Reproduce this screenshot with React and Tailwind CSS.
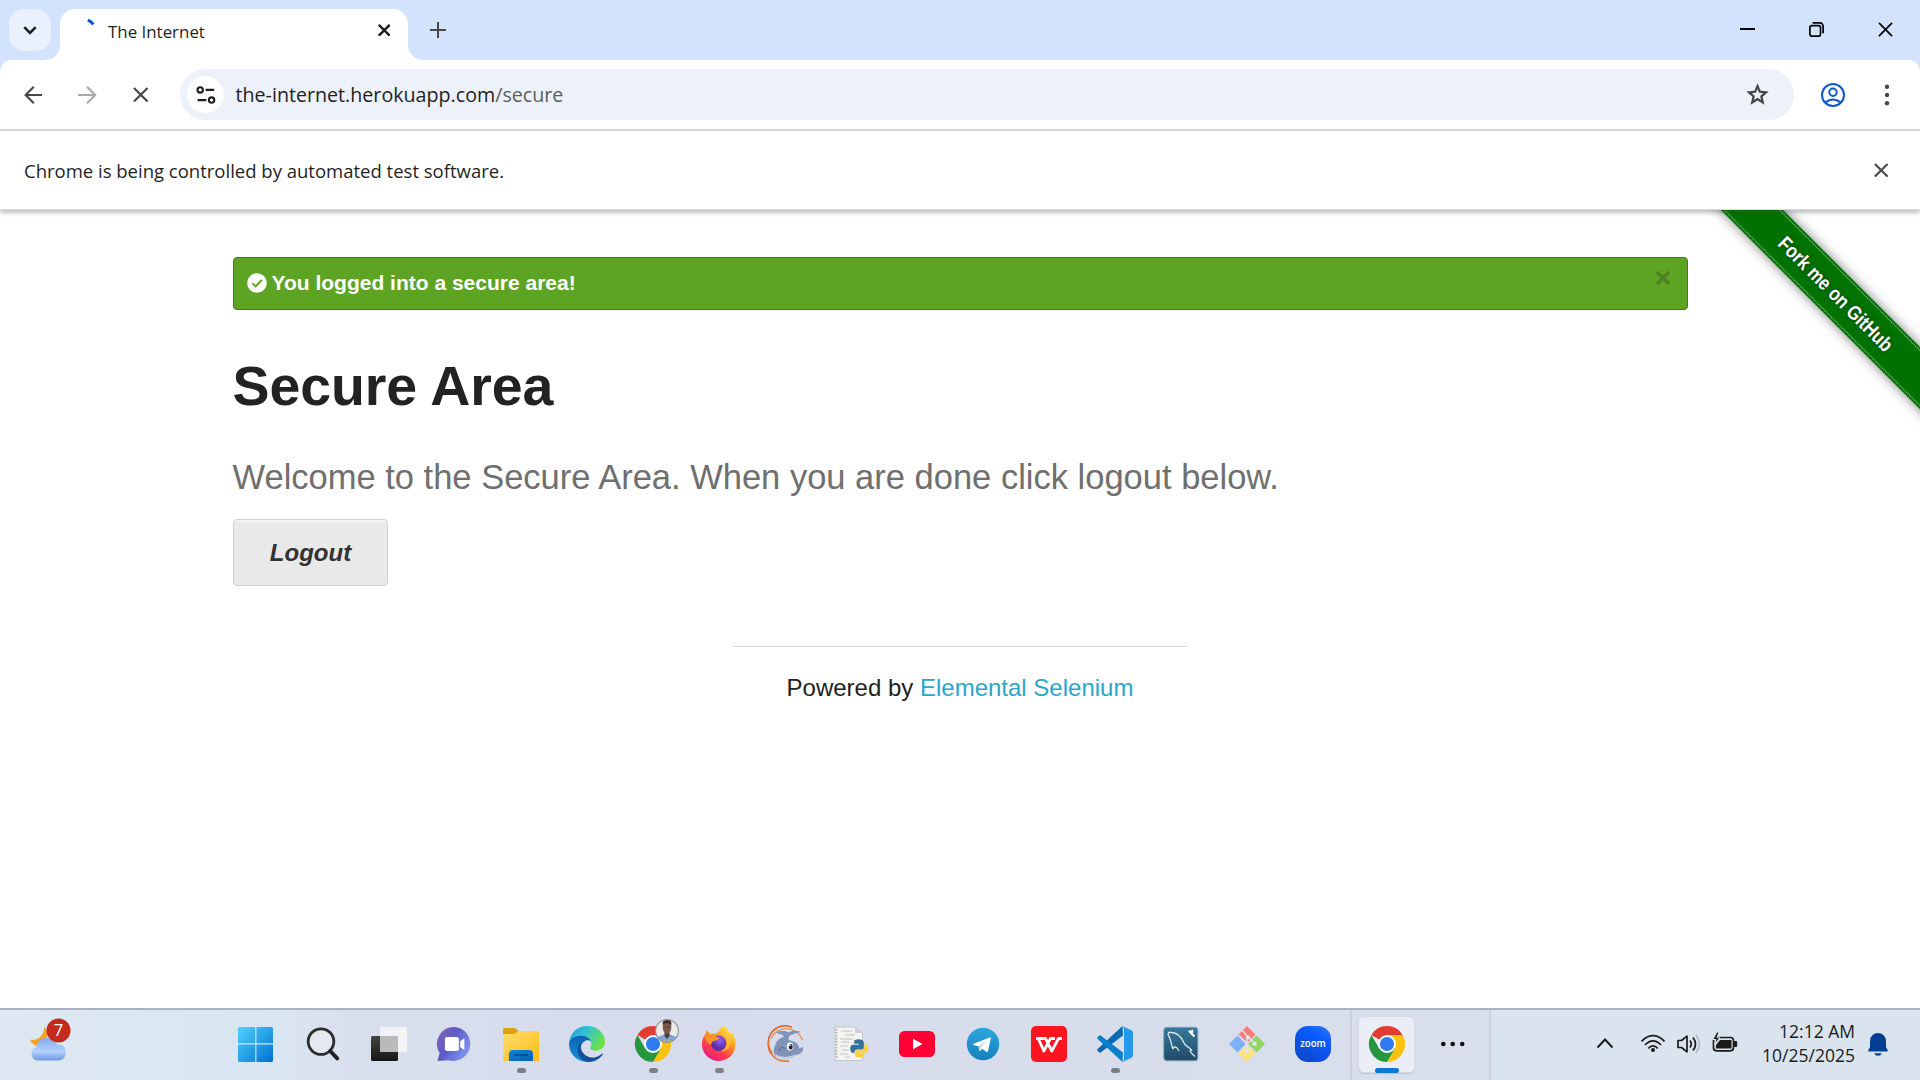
import React from 'react';

const ui = "font-['Open_Sans','Noto_Sans',sans-serif]";

function Cross({ size, width, color }) {
  return (
    <svg width={size} height={size} viewBox="0 0 16 16" className="block shrink-0">
      <path d="M1 1 15 15M15 1 1 15" fill="none" stroke={color} strokeWidth={(width * 16) / size} />
    </svg>
  );
}

function TabStrip() {
  return (
    <div className="flex h-[60px] w-full items-start bg-[#d3e3fd]">
      <button className="mt-[9px] ml-[9px] flex h-[42px] w-[42px] items-center justify-center rounded-[15px] bg-[#e9f1fe]">
        <svg width="14" height="9" viewBox="0 0 14 9"><path d="M1.3 1.2 7 6.9 12.7 1.2" fill="none" stroke="#1f1f1f" strokeWidth="2.6" /></svg>
      </button>
      <div className="relative mt-[9px] ml-[9px] flex h-[51px] w-[348px] items-center rounded-t-[15px] bg-white">
        <svg className="absolute bottom-0 -left-[15px]" width="15" height="15" viewBox="0 0 15 15"><path d="M15 0V15H0A15 15 0 0 0 15 0Z" fill="#fff" /></svg>
        <svg className="absolute -right-[15px] bottom-0" width="15" height="15" viewBox="0 0 15 15"><path d="M0 0V15H15A15 15 0 0 1 0 0Z" fill="#fff" /></svg>
        <svg className="-mt-[9px] ml-[18px] shrink-0" width="24" height="24" viewBox="0 0 24 24"><path d="M9.8 2.2Q13 3.4 15.400 6.400" fill="none" stroke="#0b57d0" strokeWidth="3" /></svg>
        <span className="-mt-[6px] ml-[6px] flex-1 text-[16.9px] leading-[24px] text-[#1f1f1f]">The Internet</span>
        <span className="-mt-[9px] mr-[18px]"><Cross size={12.5} width={2.4} color="#1f1f1f" /></span>
      </div>
      <svg className="mt-[22px] ml-[22px]" width="16" height="16" viewBox="0 0 16 16"><path d="M8 0V16M0 8H16" stroke="#474747" strokeWidth="2" /></svg>
      <div className="mt-[22px] mr-[27px] ml-auto flex items-center gap-[54px]">
        <svg width="15" height="15" viewBox="0 0 15 15"><path d="M0 7H15" stroke="#000" strokeWidth="2" /></svg>
        <svg width="15" height="15" viewBox="0 0 15 15" fill="none" stroke="#000" strokeWidth="1.7">
          <rect x=".9" y="3.6" width="10.6" height="10.6" rx="2" />
          <path d="M3.6 .9H10.6A3.6 3.6 0 0 1 14.1 4.4V11.2" />
        </svg>
        <Cross size={15} width={1.7} color="#000" />
      </div>
    </div>
  );
}

function Toolbar() {
  return (
    <div className="bg-[#d3e3fd]">
      <div className="flex h-[69px] w-full items-center rounded-t-[12px] bg-white">
        <svg className="ml-[24px]" width="19" height="18" viewBox="0 0 19 18" fill="none" stroke="#474747" strokeWidth="2.1"><path d="M18 9H2M9.8 .8 1.6 9l8.2 8.2" /></svg>
        <svg className="ml-[35px]" width="19" height="18" viewBox="0 0 19 18" fill="none" stroke="#a9a9a9" strokeWidth="2.1"><path d="M0 9H16M9 .8 17.2 9 9 17.2" /></svg>
        <span className="ml-[36px]"><Cross size={15.5} width={2.1} color="#474747" /></span>
        <div className="ml-[31.5px] flex h-[51px] w-[1614px] items-center rounded-full bg-[#ecf1fa]">
          <span className="ml-[7px] flex h-[37px] w-[37px] items-center justify-center rounded-full bg-white">
            <svg width="20" height="18" viewBox="0 0 20 18" fill="none" stroke="#1f1f1f" strokeWidth="2.1">
              <circle cx="4.2" cy="3.9" r="2.7" /><path d="M9.6 3.9H18.2M1.6 14.1H10.4" /><circle cx="15.6" cy="14.1" r="2.7" />
            </svg>
          </span>
          <span className="ml-[11.5px] text-[19.67px] leading-[28px] text-[#1f1f1f]">the-internet.herokuapp.com<span className="text-[#5b5d60]">/secure</span></span>
          <svg className="mr-[23px] ml-auto" width="27" height="27" viewBox="0 0 24 24" fill="#474747">
            <path d="m8.85 16.825 3.15-1.9 3.15 1.925-.825-3.6 2.775-2.4-3.65-.325-1.45-3.4-1.45 3.375-3.65.325 2.775 2.425zM5.825 21l1.625-7.025L2 9.25l7.2-.625L12 2l2.8 6.625 7.2.625-5.45 4.725L18.175 21 12 17.275z" />
          </svg>
        </div>
        <svg className="ml-[27px]" width="24" height="24" viewBox="0 0 24 24" fill="none" stroke="#0b57d0" strokeWidth="2">
          <circle cx="12" cy="12" r="11" /><circle cx="12" cy="9.3" r="3.7" /><path d="M4.4 19.4Q8 16.6 12 16.6T19.6 19.4" />
        </svg>
        <svg className="ml-[39px]" width="6" height="24" viewBox="0 0 6 24" fill="#474747"><circle cx="3" cy="3.7" r="2.2" /><circle cx="3" cy="12" r="2.2" /><circle cx="3" cy="20.3" r="2.2" /></svg>
      </div>
    </div>
  );
}

function InfoBar() {
  return (
    <div className="relative z-10 flex h-[81px] w-full items-center justify-between border-t-2 border-b border-t-[#d6d7d8] border-b-[#d9dbdc] bg-white pr-[32px] pl-[24px] shadow-[0_3px_4px_0_rgba(60,70,64,0.32)]">
      <span className="pt-[2px] text-[18.5px] leading-[26px] text-[#1f1f1f]">Chrome is being controlled by automated test software.</span>
      <Cross size={14.5} width={2.1} color="#474747" />
    </div>
  );
}

function Ribbon() {
  return (
    <div className="absolute top-0 right-0 h-[240px] w-[240px] overflow-hidden">
      <div className="absolute top-[62px] -left-[44px] flex h-[43.5px] w-[400px] rotate-45 items-center justify-center bg-[#007200] shadow-[0_0_12px_rgba(0,0,0,0.5)]">
        <div className="absolute inset-x-0 top-[2px] border-t-[1.5px] border-dotted border-[#a9d3a9]" />
        <div className="absolute inset-x-0 bottom-[2px] border-b-[1.5px] border-dotted border-[#a9d3a9]" />
        <span className="mr-[1px] scale-x-[0.85] text-[20px] leading-[28px] font-bold whitespace-nowrap text-white [text-shadow:0_0_4px_rgba(0,0,0,0.6)]">Fork me on GitHub</span>
      </div>
    </div>
  );
}

function Page() {
  return (
    <main className="relative h-[798px] w-full overflow-hidden bg-white pt-[47px] font-['Liberation_Sans',Arial,sans-serif]">
      <div className="mx-auto w-[1455px]">
        <div className="flex h-[53px] items-center rounded-[4px] border border-[#457a1a] bg-[#5da423] pb-[2px] pl-[13px]">
          <svg width="20" height="20" viewBox="0 0 20 20"><circle cx="10" cy="10" r="9.8" fill="#fff" /><path d="M5.4 10.3 8.7 13.4 14.8 7" fill="none" stroke="#5da423" strokeWidth="1.9" /></svg>
          <span className="ml-[5px] text-[21px] leading-[26px] font-bold text-white">You logged into a secure area!</span>
          <span className="mr-[16.5px] mb-[10px] ml-auto"><Cross size={14} width={3.6} color="#4f8225" /></span>
        </div>
        <h2 className="mt-[37px] text-[55.5px] leading-[78px] font-bold tracking-[-0.1px] text-[#222]">Secure Area</h2>
        <h4 className="mt-[28px] text-[34.5px] leading-[48px] whitespace-nowrap text-[#6f6f6f]">Welcome to the Secure Area. When you are done click logout below.</h4>
        <button className="mt-[18px] flex h-[67px] w-[155px] items-center justify-center rounded-[4px] border border-[#d0d0d0] bg-[#e9e9e9] pl-[1px] text-[24px] leading-[28px] font-bold text-[#333] italic shadow-[inset_0_2px_0_rgba(255,255,255,0.5)]">Logout</button>
      </div>
      <footer className="mx-auto mt-[60px] w-[454px] border-t border-[#d8d8d8] pt-[27px] text-center text-[24px] leading-[28px] text-[#222]">
        Powered by <a className="text-[#2ba6cb]">Elemental Selenium</a>
      </footer>
      <Ribbon />
    </main>
  );
}

function Icon({ children }) {
  return <svg width="36" height="36" viewBox="0 0 36 36" className="block overflow-visible">{children}</svg>;
}

function ChromeLogo() {
  return (
    <Icon>
      <path d="M18 18 2.4 9A18 18 0 0 1 33.6 9Z" fill="#e33b2e" />
      <path d="M18 18V9H33.6A18 18 0 0 1 18 36L25.8 22.5Z" fill="#fcc210" />
      <path d="M18 18 25.8 22.5 18 36A18 18 0 0 1 2.4 9L10.2 22.5Z" fill="#26963f" />
      <circle cx="18" cy="18" r="9" fill="#fff" /><circle cx="18" cy="18" r="7.1" fill="#307cee" />
    </Icon>
  );
}

const apps = [
  { id: 'start', icon: (
    <Icon>
      <defs><linearGradient id="win" x1="0" y1="0" x2="1" y2="1"><stop offset="0" stopColor="#4fd3ff" /><stop offset="1" stopColor="#0070d0" /></linearGradient></defs>
      <path d="M0 1.5Q0 1 .8 1H15.5Q16.3 1 16.3 1.5V17.2H-1V2.5Q-1 1 .5 1ZM17.4 1H32.5Q34 1 34 2.5V17.2H17.4ZM-1 18.6H16.3V36H.5Q-1 36-1 34.5ZM17.4 18.6H34V34.5Q34 36 32.5 36H17.4Z" fill="url(#win)" />
    </Icon>) },
  { id: 'search', icon: (
    <Icon><circle cx="16" cy="15.6" r="12.8" fill="#e6e8ef" stroke="#2c2c2c" strokeWidth="2.8" /><path d="M25.2 25 32.2 32.4" stroke="#222" strokeWidth="4" strokeLinecap="round" /></Icon>) },
  { id: 'taskview', icon: (
    <Icon>
      <defs><linearGradient id="tv" x1="0" y1="0" x2="0" y2="1"><stop offset="0" stopColor="#444" /><stop offset="1" stopColor="#161616" /></linearGradient></defs>
      <rect x="0" y="10" width="27" height="25" rx="1.5" fill="url(#tv)" /><rect x="9" y="1" width="27" height="25" rx="1.5" fill="#f3f3f5" /><path d="M9 10H27V26H10.5Q9 26 9 24.5Z" fill="#bababa" />
    </Icon>) },
  { id: 'meet', icon: (
    <Icon>
      <defs><linearGradient id="mt" x1="0" y1="0" x2="1" y2=".6"><stop offset="0" stopColor="#8a64b0" /><stop offset=".5" stopColor="#5c5cc8" /><stop offset="1" stopColor="#7f94ee" /></linearGradient></defs>
      <g transform="translate(.9 0)">
        <path d="M17 1A17 17 0 1 1 10.500 34.200L-.5 35 1.700 27A17 17 0 0 1 17 1Z" fill="url(#mt)" />
        <rect x="7" y="11" width="14" height="14" rx="2" fill="#fff" /><path d="M22.300 15.400 26.500 12V24.300L22.300 21Z" fill="#fff" />
      </g>
    </Icon>) },
  { id: 'files', running: true, icon: (
    <Icon>
      <defs><linearGradient id="fo" x1="0" y1="0" x2="1" y2="1"><stop offset="0" stopColor="#ffdd70" /><stop offset="1" stopColor="#fbbc14" /></linearGradient><linearGradient id="fb" x1="0" y1="0" x2="1" y2="1"><stop offset="0" stopColor="#0d86dc" /><stop offset="1" stopColor="#0560ae" /></linearGradient></defs>
      <path d="M0 3.500Q0 2 1.500 2H11Q12.500 2 13.500 3L16 5.500V10H0Z" fill="#dfa010" /><path d="M0 8H10.500Q12 8 13 7L15 5H34.500Q36 5 36 6.500V35H0Z" fill="url(#fo)" />
      <path d="M6 35V28Q6 24 10 24H26Q30 24 30 28V35Z" fill="url(#fb)" /><path d="M11 29H25" stroke="#064f94" strokeWidth="1.800" />
    </Icon>) },
  { id: 'edge', icon: (
    <Icon>
      <defs>
        <linearGradient id="ed1" x1="0" y1="0" x2="1" y2=".5"><stop offset="0" stopColor="#2196dc" /><stop offset=".45" stopColor="#2fc3d4" /><stop offset="1" stopColor="#6be04a" /></linearGradient>
        <linearGradient id="ed2" x1="0" y1="0" x2="0" y2="1"><stop offset="0" stopColor="#0c62b4" /><stop offset="1" stopColor="#1390dc" /></linearGradient>
      </defs>
      <path d="M.2 16C1.500 6 9 0 18 0 28.500 0 36 7.500 36 15.500 36 21 32 24.800 27 24.800 23.500 24.800 21 23.500 21 22 21 21 22.300 20.200 22.300 17.800 22.300 13 17.500 9.500 12 9.500 6 9.500 1.500 12.500.2 16Z" fill="url(#ed1)" />
      <path d="M0 18C0 13 5.500 9.500 12 9.500 17.500 9.500 21.500 12.500 22.300 16 20 13 14 14 12 20 10.500 27 16 34 22 35.500A18 18 0 0 1 0 18Z" fill="url(#ed2)" />
      <path d="M12.500 16.500C9.500 25 17 32.500 25 31.500 28.500 31 31 29.500 33 27.500Q34.500 27 33.500 29A18 18 0 0 1 20 36C13 35.500 8 30 8.500 23.500 8.800 20 10.500 17.500 12.500 16.500Z" fill="#12509c" />
    </Icon>) },
  { id: 'chrome', running: true, avatar: true, icon: <ChromeLogo /> },
  { id: 'firefox', running: true, icon: (
    <Icon>
      <defs><linearGradient id="ff" x1=".85" y1="0" x2=".25" y2="1"><stop offset="0" stopColor="#fff44f" /><stop offset=".4" stopColor="#ff9a1f" /><stop offset=".7" stopColor="#ff3d4a" /><stop offset="1" stopColor="#e31587" /></linearGradient>
        <radialGradient id="fp" cx=".6" cy=".3"><stop offset="0" stopColor="#9a5cff" /><stop offset="1" stopColor="#5b2fa8" /></radialGradient></defs>
      <g transform="translate(.5 0)">
        <path d="M22.500 0C27 3 28 6 28.500 8L30.500 6.500C33 10 34 14 34 18A16.700 16.700 0 0 1 .5 18.500C.5 13 2.500 9.500 4.500 7.500V4.500Q7 5.500 8.500 8L12.500 7.500C16 7.500 18 5 18.500 3Q19.500 1.500 22.500 0Z" fill="url(#ff)" />
        <circle cx="17" cy="17.300" r="7.700" fill="url(#fp)" />
        <path d="M3 10Q7 6 11.500 9.500L18 11.500Q17 14 13.500 14.700 10.500 15 9.500 18.500 5 17 3 10Z" fill="#ff9722" />
        <path d="M19 6Q26 9 25.500 17 25 23 19 25.500 29 25 29.500 15 28 6 21 3Z" fill="#ffc83c" opacity=".7" />
      </g>
    </Icon>) },
  { id: 'dolphin', icon: (
    <Icon>
      <path d="M35.500 14A17 17 0 0 0 4 12.500" fill="none" stroke="#f0913c" strokeWidth="1.400" />
      <path d="M25 1.200A16.800 16.800 0 0 0 5 27" fill="none" stroke="#df5a24" strokeWidth="1.500" />
      <path d="M1.800 14A17 17 0 0 0 22 34.800" fill="none" stroke="#e8702c" strokeWidth="1.600" />
      <path d="M8 20C9 14 14 12 17 10.500 16 8.500 12 8 9 6.500 14 4.300 19 5 21.500 6.500 25 4 29.500 4.500 34 6 28 7.500 23 8.500 21.500 11.500 21 14.500 24 15 27 15.500 31 17 31.500 20.500 32.500 22.500L35.500 21Q37 22 35 26C32 29 29 28.500 27 30 21 35 9 34 7 27 6.500 24 7 22 8 20Z" fill="#8093b8" />
      <path d="M8 28Q17 34 29 28 20 36 10 32.500Z" fill="#c6d2e6" /><path d="M12 25Q14 19 18 23" fill="none" stroke="#5f7298" strokeWidth="1.200" />
      <ellipse cx="23" cy="20.500" rx="3.200" ry="4" fill="#fff" /><ellipse cx="23.700" cy="20.800" rx="2" ry="2.700" fill="#1d2026" /><circle cx="23" cy="19.500" r=".8" fill="#fff" />
    </Icon>) },
  { id: 'python', icon: (
    <Icon>
      <path d="M2 1H22L29.500 7V34.500H2Z" fill="#f3f3f1" stroke="#b9bcc4" strokeWidth=".8" /><path d="M22 1V7H29.500Z" fill="#cfd0d4" />
      <path d="M3.500 3V33" stroke="#aaa" strokeWidth="1.600" strokeDasharray="1.500 1.500" /><path d="M8 5H19M12 9H22M7 13H20M8 16H16M7 20H15M9 24H16M7 28H15M12 31H17" stroke="#c2c2c0" strokeWidth="1" />
      <g transform="translate(-.2 0)">
        <path d="M22 14Q25.500 12.600 29.500 14 31 15 31 17V21.500Q31 23.500 29 23.500H24.500Q22 23.500 21.500 26V27H20Q17.500 26.500 17.500 22.500T20.500 18.700H26V17.700H21.500V15.500Q21.500 14.300 22 14Z" fill="#34709f" />
        <path d="M31.500 18.500H33.500Q35.500 19.500 35.500 23T33.500 26.500H27.500V27.500H31.500V29Q31.500 30.500 29.500 31 26.500 31.700 23.500 30.700 22 30 22 28.500V26Q22.200 24.300 24.500 24.200H29.500Q31.500 24 31.500 21.500Z" fill="#ffd03d" />
      </g>
    </Icon>) },
  { id: 'youtube', icon: <Icon><rect x="0" y="5" width="36" height="26" rx="5.500" fill="#ff0033" /><path d="M14 12.800V23.200L23.500 18Z" fill="#fff" /></Icon> },
  { id: 'telegram', icon: (
    <Icon>
      <defs><linearGradient id="tg" x1="0" y1="0" x2="0" y2="1"><stop offset="0" stopColor="#2ea6e0" /><stop offset="1" stopColor="#1580ba" /></linearGradient></defs>
      <circle cx="18" cy="18" r="16.200" fill="url(#tg)" /><path d="M8.500 17.800 24.500 11.400Q26 11 25.700 12.800L23 25.300Q22.500 26.600 21.200 25.800L17.200 22.800 15.200 24.800Q14.500 25.400 14.300 24.300L13.700 20.600 8.700 19Q7.300 18.400 8.500 17.800Z" fill="#fff" /><path d="M13.700 20.600 22 14.300 15.600 21.500 15 24.500" fill="#b5d5e8" />
    </Icon>) },
  { id: 'wps', icon: (
    <Icon>
      <rect width="36" height="36" rx="5" fill="#ff1420" />
      <path d="M5 12.500H14.500L20.800 25 27.500 12.500H31M7.300 12.500 12.800 25 19.500 12.500H24" fill="none" stroke="#fff" strokeWidth="2.800" strokeLinejoin="round" />
    </Icon>) },
  { id: 'vscode', running: true, icon: (
    <Icon><path d="M26 9.500 4 26.300Q3 27 2 26.200L.6 24.800Q-.2 24 .6 23L25.500 0Z" fill="#0b68b4" /><path d="M26 26.500 4 9.700Q3 9 2 9.800L.6 11.200Q-.2 12 .6 13L25.500 36Z" fill="#0a80cc" /><path d="M25 0 34.500 4.300Q36 5 36 6.500V29.500Q36 31 34.500 31.700L25.500 36Q27 35 27 33V3Q27 1 25 0Z" fill="#2498ea" /></Icon>) },
  { id: 'mysql', icon: (
    <Icon>
      <defs><linearGradient id="my" x1="0" y1="0" x2="0" y2="1"><stop offset="0" stopColor="#36789b" /><stop offset="1" stopColor="#214b66" /></linearGradient></defs>
      <rect x=".8" y="1.300" width="34" height="33.500" rx="3" fill="url(#my)" stroke="#79a3bb" strokeWidth="1" />
      <path d="M10 23C8 19 8.500 15 6 10.500 4 8 5.500 5.500 8.500 6.500 14 6.500 18 10 21 17 22 20 25 20 28.500 24 26 24.500 27 26 32 30.500M10 23Q11 19.500 14 22L16 25" fill="none" stroke="#dcebf2" strokeWidth="1.300" />
      <path d="M26 4.500 28 7 31.500 10.500M29 3.800Q30 7 28 7" fill="none" stroke="#fff" strokeWidth="2.200" />
    </Icon>) },
  { id: 'git', icon: (
    <Icon>
      <path d="M18 0 26.500 8.500 18.500 16.500 9.500 8.500Z" fill="#fb7b7b" /><path d="M8.500 9.500 16.500 18 8.500 26.500 0 18Z" fill="#7eb0fd" /><path d="M27.500 9.500 36 18 27.500 26.500 19 18Z" fill="#8fd561" /><path d="M18 19.500 26.500 27.500 18 36 9.500 27.500Z" fill="#fde27e" />
      <path d="M13 4 18 10V25M20 12 25 17" fill="none" stroke="#e3e5ee" strokeWidth="1.500" /><circle cx="19" cy="11.500" r="2.100" fill="#e3e5ee" /><circle cx="25.500" cy="17.800" r="2.300" fill="#e3e5ee" /><circle cx="18" cy="25" r="2.300" fill="#e3e5ee" />
    </Icon>) },
  { id: 'zoom', icon: (
    <Icon>
      <defs><linearGradient id="zm" x1="1" y1="0" x2=".3" y2="1"><stop offset="0" stopColor="#2f7bff" /><stop offset=".35" stopColor="#0b5cff" /><stop offset="1" stopColor="#0a49cc" /></linearGradient></defs>
      <rect width="36" height="36" rx="13" fill="url(#zm)" /><text x="18" y="21.200" textAnchor="middle" textLength="25.500" lengthAdjust="spacingAndGlyphs" fill="#fff" fontSize="11" fontWeight="600" fontFamily="Open Sans, sans-serif">zoom</text>
    </Icon>) },
];

function Avatar() {
  return (
    <svg className="absolute top-[9px] left-[35px]" width="24" height="24" viewBox="0 0 24 24">
      <defs><clipPath id="av"><circle cx="12" cy="12" r="11.300" /></clipPath></defs>
      <g clipPath="url(#av)">
        <rect width="24" height="24" fill="#ece9e8" /><path d="M0 24 2 18 9 15.500H15L22 18 24 24Z" fill="#7fa6d6" /><path d="M9.500 12H14.500V17L12 20 9.500 17Z" fill="#553d34" />
        <ellipse cx="12" cy="8.300" rx="4.300" ry="6.500" fill="#7a5a4d" /><path d="M7.600 6Q7 1 12 .8T16.400 6Q12 2.200 7.600 6Z" fill="#3a2d29" /><path d="M10 8H11M13.200 8H14.200" stroke="#33241f" strokeWidth="1" /><path d="M8 21.500H11V24H8ZM13 21.500H16V24H13Z" fill="#e2c22e" />
      </g>
      <circle cx="12" cy="12" r="11.400" fill="none" stroke="#8d8f96" strokeWidth="1.100" />
    </svg>
  );
}

function Taskbar() {
  return (
    <div className="flex h-[72px] w-full border-t-2 border-[#abb3bf] bg-[linear-gradient(90deg,#dde8f2_0%,#d9e6f1_14%,#d8dfec_19%,#d6dcec_30%,#d8ddeb_60%,#d9dfeb_77%,#dae4ee_78%,#dae4ee_100%)]">
      <svg className="mt-[6px] ml-[24px] shrink-0" width="54" height="54" viewBox="0 0 54 54">
        <defs><linearGradient id="cl" x1="0" y1="0" x2="0" y2="1"><stop offset="0" stopColor="#85aaf0" /><stop offset=".6" stopColor="#b4d0fa" /><stop offset="1" stopColor="#6b98e4" /></linearGradient></defs>
        <path d="M20.500 10Q24 15 23 24L12 30Q7 27 6 23.500 11 25 15.500 21.500 20.500 17 20.500 10Z" fill="#f6a423" />
        <path d="M13 44.500A7 7 0 0 1 12.500 31Q14 22 22.500 22T33 28.500Q42 27.500 42 37 41 44.500 34 44.500Z" fill="url(#cl)" />
        <circle cx="34.500" cy="14.500" r="12" fill="#c42b1c" />
        <text x="34.500" y="20" textAnchor="middle" fill="#fff" fontSize="16.500" fontFamily="Open Sans, sans-serif">7</text>
      </svg>
      <div className="ml-[146px] flex">
        {apps.map((app) => (
          <div key={app.id} className="relative flex h-[70px] w-[66px] flex-col items-center pt-[16px]">
            {app.icon}
            {app.avatar && <Avatar />}
            {app.running && <span className="mt-[6px] h-[5px] w-[9px] rounded-full bg-[#7b7f88]" />}
          </div>
        ))}
      </div>
      <div className="ml-[4px] flex w-[141px] border-x-2 border-[#cbd0dd]">
        <div className="mt-[6px] ml-[6px] flex h-[57px] w-[57px] flex-col items-center rounded-[6px] border border-[#d5dae6] bg-[#ebeef6] pt-[9px] shadow-[0_1px_1px_rgba(0,0,0,0.12)]">
          <ChromeLogo />
          <span className="mt-[6px] h-[5px] w-[24px] shrink-0 rounded-full bg-[#0a78d4]" />
        </div>
        <svg className="mt-[31px] ml-[25px]" width="26" height="6" viewBox="0 0 26 6" fill="#111"><circle cx="3.300" cy="3" r="2.300" /><circle cx="12.700" cy="3" r="2.300" /><circle cx="22.200" cy="3" r="2.300" /></svg>
      </div>
      <svg className="mt-[19px] ml-[104px] shrink-0" width="146" height="30" viewBox="0 0 146 30" fill="none" stroke="#1a1a1a" strokeWidth="1.900">
        <path d="M2.500 18.500 10 10.500 17.500 18.500" />
        <path d="M46.500 12.300Q58 1 69.500 12.300M50 16Q58 8 66 16M53.300 19.300Q58 14.500 62.700 19.300" strokeWidth="1.700" /><circle cx="58" cy="21" r="2" fill="#1a1a1a" stroke="none" />
        <g transform="translate(.5 0)"><path d="M82.500 11.500H86L91.500 7.200V22.800L86 18.500H82.500Z" strokeWidth="1.700" strokeLinejoin="round" /><path d="M94.500 11.500Q97 15 94.500 18.500M97.500 8.500Q102.500 15 97.500 21.500" strokeWidth="1.700" /><path d="M100.500 6Q107.500 15 100.500 24" stroke="#aeb5be" strokeWidth="1.500" /></g>
        <rect x="118.500" y="8.500" width="20" height="13.300" rx="3" strokeWidth="1.700" /><path d="M125 11H136.500V19.500H121V16Z" fill="#1a1a1a" stroke="none" /><path d="M139.500 12.500H141.700V17.500H139.500Z" fill="#1a1a1a" strokeWidth="1" />
        <path d="M121.800 3 117.800 10.500H121L119.500 15.500 125 8.800H122L124 3Z" fill="#1a1a1a" stroke="#dae4ee" strokeWidth="1" />
      </svg>
      <div className="ml-auto flex flex-col items-end pt-[9px] text-[17.500px] leading-[24px] text-[#1a1a1a]">
        <span>12:12 AM</span>
        <span>10/25/2025</span>
      </div>
      <svg className="mt-[23px] mr-[32px] ml-[13px] shrink-0" width="20" height="24" viewBox="0 0 20 24" fill="#003e92"><path d="M10 0A8 8 0 0 1 18 8V14L19.800 17.500Q19.800 18.500 19 18.500H1Q.2 18.500.2 17.500L2 14V8A8 8 0 0 1 10 0ZM6.300 20.300H13.700A3.800 3.300 0 0 1 6.300 20.300Z" /></svg>
    </div>
  );
}

export default function App() {
  return (
    <div className={`flex h-[1080px] w-[1920px] flex-col overflow-hidden bg-white ${ui}`}>
      <TabStrip />
      <Toolbar />
      <InfoBar />
      <Page />
      <Taskbar />
    </div>
  );
}
